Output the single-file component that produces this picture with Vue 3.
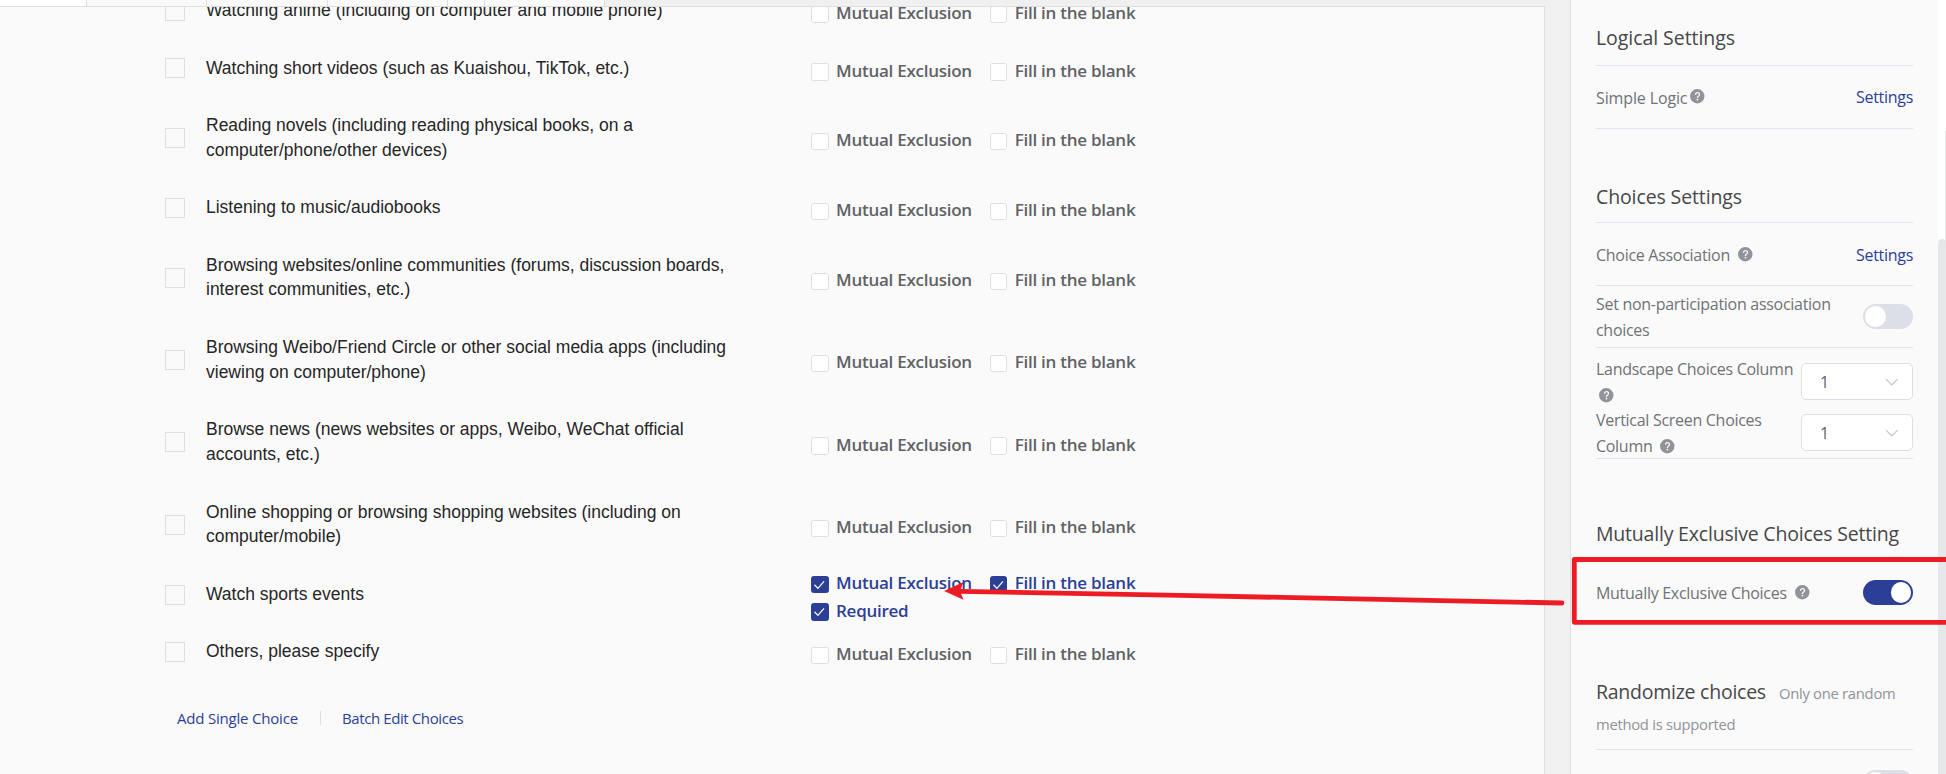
<script setup>
const plain = [{ label: 'Mutual Exclusion' }, { label: 'Fill in the blank' }]
const checked = [
  { label: 'Mutual Exclusion', on: true },
  { label: 'Fill in the blank', on: true },
  { label: 'Required', on: true },
]
const choices = [
  { lines: ['Watching anime (including on computer and mobile phone)'], options: plain },
  { lines: ['Watching short videos (such as Kuaishou, TikTok, etc.)'], options: plain },
  { lines: ['Reading novels (including reading physical books, on a', 'computer/phone/other devices)'], options: plain },
  { lines: ['Listening to music/audiobooks'], options: plain },
  { lines: ['Browsing websites/online communities (forums, discussion boards,', 'interest communities, etc.)'], options: plain },
  { lines: ['Browsing Weibo/Friend Circle or other social media apps (including', 'viewing on computer/phone)'], options: plain },
  { lines: ['Browse news (news websites or apps, Weibo, WeChat official', 'accounts, etc.)'], options: plain },
  { lines: ['Online shopping or browsing shopping websites (including on', 'computer/mobile)'], options: plain },
  { lines: ['Watch sports events'], options: checked },
  { lines: ['Others, please specify'], options: plain },
]
const helpPath =
  'M512 64a448 448 0 1 1 0 896 448 448 0 0 1 0-896zm23.744 191.488c-52.096 0-92.928 14.784-123.2 44.352-30.976 29.568-45.76 70.4-45.76 122.496h80.256c0-29.568 5.632-52.8 17.6-68.992 13.376-19.712 35.2-28.864 66.176-28.864 23.936 0 44.352 6.336 57.728 19.712 12.672 13.376 19.712 31.68 19.712 54.912 0 17.6-6.336 34.496-19.008 49.984l-8.448 9.856c-45.76 40.832-73.216 70.4-82.368 89.408-9.856 19.008-14.08 42.24-14.08 68.992v9.856h80.96v-9.856c0-16.896 3.52-31.68 10.56-45.76 6.336-12.672 15.488-24.64 28.16-35.2 33.792-29.568 54.208-48.576 60.544-55.616 16.896-22.528 26.048-51.392 26.048-86.592 0-42.944-14.08-76.736-42.24-101.376-28.16-25.344-65.472-37.312-111.232-37.312zm-12.672 406.208a54.272 54.272 0 0 0-38.72 14.784 49.408 49.408 0 0 0-15.488 38.016c0 15.488 4.928 28.16 15.488 38.016A54.848 54.848 0 0 0 523.072 768c15.488 0 28.16-4.928 38.72-14.784a51.52 51.52 0 0 0 16.192-38.72 51.968 51.968 0 0 0-15.488-38.016 55.936 55.936 0 0 0-39.424-14.784z'
</script>

<template>
  <div class="app">
    <div class="main">
      <div class="toolbar">
        <i class="tab first"></i><i class="tab"></i><i class="tab"></i><i class="tab"></i><i class="tab small"></i><i class="tab"></i>
      </div>
      <div class="sheet">
        <div class="list">
          <div v-for="(c, i) in choices" :key="i" class="choice" :class="{ double: c.lines.length > 1 }">
            <span class="box"></span>
            <div class="label"><div v-for="l in c.lines" :key="l">{{ l }}</div></div>
            <div class="options">
              <span v-for="o in c.options" :key="o.label" class="option" :class="{ on: o.on }">
                <span class="check">
                  <svg v-if="o.on" viewBox="0 0 18 18"><path d="M3.6 9l3.5 3.7L13.4 5.6" /></svg>
                </span>
                <span class="txt">{{ o.label }}</span>
              </span>
            </div>
          </div>
        </div>
        <div class="actions">
          <a class="add">Add Single Choice</a><i class="sep"></i><a class="batch">Batch Edit Choices</a>
        </div>
      </div>
    </div>

    <aside class="side">
      <h3 class="h-logic">Logical Settings</h3>
      <div class="row r-logic">
        <span class="logic-name">Simple Logic<svg class="help raised" viewBox="0 0 1024 1024"><path :d="helpPath" /></svg></span>
        <a>Settings</a>
      </div>
      <h3 class="h-choices">Choices Settings</h3>
      <div class="row r-assoc">
        <span>Choice Association<svg class="help spaced" viewBox="0 0 1024 1024"><path :d="helpPath" /></svg></span>
        <a>Settings</a>
      </div>
      <div class="row r-non">
        <span>Set non-participation association<br />choices</span>
        <span class="switch"></span>
      </div>
      <div class="columns">
        <div class="col-row">
          <span>Landscape Choices Column<br /><svg class="help start" viewBox="0 0 1024 1024"><path :d="helpPath" /></svg></span>
          <span class="select">1<svg viewBox="0 0 14 8"><path d="M1 1l6 6 6-6" /></svg></span>
        </div>
        <div class="col-row">
          <span>Vertical Screen Choices<br />Column<svg class="help spaced" viewBox="0 0 1024 1024"><path :d="helpPath" /></svg></span>
          <span class="select">1<svg viewBox="0 0 14 8"><path d="M1 1l6 6 6-6" /></svg></span>
        </div>
      </div>
      <h3 class="h-mutual">Mutually Exclusive Choices Setting</h3>
      <div class="row r-mutual">
        <span>Mutually Exclusive Choices<svg class="help spaced" viewBox="0 0 1024 1024"><path :d="helpPath" /></svg></span>
        <span class="switch on"></span>
      </div>
      <h3 class="h-random">Randomize choices<small class="s1">Only one random</small><br /><small>method is supported</small></h3>
      <div class="row r-last"><span></span><span class="switch"></span></div>
    </aside>

    <div class="rail"><i class="outer"></i><i class="thumb"></i></div>

    <svg class="marks" viewBox="0 0 1946 774">
      <path class="stroke" d="M1950 559.5H1574.3V622.3H1950" />
      <path class="stroke" d="M960 591.4L1180 595.4L1562 603" />
      <path class="head" d="M944 591L963.5 582L960 591L963.5 599.8Z" />
    </svg>
  </div>
</template>

<style>
body {
  margin: 0;
}
</style>

<style scoped>
.app {
  position: relative;
  display: flex;
  width: 1946px;
  height: 774px;
  overflow: hidden;
  background: #f0f0f0;
  font-family: 'Open Sans', 'Noto Sans', sans-serif;
  font-size: 16px;
  color: #606266;
}
.main {
  width: 1570px;
  height: 774px;
}
.toolbar {
  display: flex;
  height: 6px;
}
.tab {
  box-sizing: border-box;
  width: 120.3px;
  background: #fafafa;
  border-right: 1px solid #dedede;
}
.tab.first {
  width: 87px;
  background: #fff;
}
.tab.small {
  width: 37.3px;
}
.sheet {
  box-sizing: border-box;
  width: 1545px;
  height: 768px;
  overflow: hidden;
  background: #fafafa;
  border-top: 1px solid #dedede;
  border-right: 1px solid #dedede;
}
.list {
  margin-top: -24.6px;
  padding-left: 165px;
}
.choice {
  display: flex;
  align-items: center;
  height: 57.35px;
}
.choice.double {
  height: 82.3px;
}
.box {
  box-sizing: border-box;
  width: 20px;
  height: 20px;
  margin-right: 21px;
  border: 1px solid #dcdfe6;
}
.label {
  width: 605px;
  font: 17.5px/24.6px 'Liberation Sans', Arial, sans-serif;
  color: #262626;
  padding-bottom: 1px;
  white-space: nowrap;
}
.options {
  display: flex;
  flex-wrap: wrap;
  width: 360px;
  padding-top: 7px;
}
.option {
  display: flex;
  align-items: center;
  width: 178.7px;
  height: 27.4px;
}
.check {
  box-sizing: border-box;
  width: 17.5px;
  height: 17.5px;
  margin-right: 7.5px;
  background: #fff;
  border: 1px solid #dcdfe6;
  border-radius: 2.5px;
}
.check svg {
  display: block;
  width: 17.5px;
  height: 17.5px;
  margin: -1px;
  fill: none;
  stroke: #fff;
  stroke-width: 1.25;
}
.txt {
  font-size: 17px;
  font-weight: 600;
  line-height: 20px;
  letter-spacing: -0.26px;
  white-space: nowrap;
  margin-top: -2.5px;
}
.on .check {
  background: #2b3f97;
  border-color: #2b3f97;
}
.on .txt {
  color: #2b3f97;
}
.actions {
  display: flex;
  align-items: center;
  height: 24px;
  margin-top: 25px;
  padding-left: 177px;
  font-size: 15px;
  color: #2b3f97;
  white-space: nowrap;
}
.add {
  width: 143px;
  letter-spacing: -0.2px;
}
.sep {
  width: 1px;
  height: 14px;
  margin-right: 21px;
  background: #dcdfe6;
}
.batch {
  letter-spacing: -0.4px;
}
.side {
  box-sizing: border-box;
  width: 368px;
  height: 774px;
  overflow: hidden;
  padding: 0 25px;
  background: #fafafa;
  border-left: 1px solid #dcdfe6;
  letter-spacing: -0.29px;
  line-height: 26px;
  color: #707277;
}
h3 {
  box-sizing: border-box;
  display: flex;
  align-items: center;
  margin: 0;
  border-bottom: 1px solid #dfe4ed;
  font-size: 19.5px;
  font-weight: 400;
  letter-spacing: -0.12px;
  color: #464749;
  white-space: nowrap;
}
.h-logic {
  height: 66px;
  padding-top: 11px;
  letter-spacing: -0.06px;
}
.h-choices {
  height: 53px;
  margin-top: 41px;
  padding-top: 1px;
}
.h-mutual {
  height: 52px;
  margin-top: 49px;
  padding-top: 1px;
  letter-spacing: -0.2px;
}
.h-random {
  display: block;
  height: 77px;
  margin-top: 48px;
  padding-top: 4px;
  line-height: 30px;
  letter-spacing: -0.25px;
}
small {
  font-size: 14.8px;
  letter-spacing: -0.28px;
  color: #909399;
}
.s1 {
  margin-left: 13px;
}
.row {
  box-sizing: border-box;
  display: flex;
  align-items: center;
  justify-content: space-between;
  border-bottom: 1px solid #dfe4ed;
  white-space: nowrap;
}
.row a {
  color: #2b3f97;
}
.r-logic {
  height: 63px;
}
.logic-name {
  padding-top: 2px;
  letter-spacing: -0.13px;
}
.r-assoc {
  height: 63px;
  padding-top: 1px;
}
.r-non {
  height: 62px;
}
.r-non span:first-child {
  padding-top: 1px;
}
.r-mutual {
  height: 65px;
  border-bottom: 0;
}
.r-last {
  align-items: flex-start;
  padding-top: 20px;
  border: 0;
}
.help {
  width: 16.5px;
  height: 16.5px;
  fill: #909399;
  vertical-align: -2px;
}
.spaced {
  margin-left: 7px;
}
.raised {
  margin-left: 2px;
  vertical-align: 0;
}
.start {
  margin-left: 2px;
}
.columns {
  padding-top: 8px;
  border-bottom: 1px solid #dfe4ed;
}
.col-row {
  display: flex;
  align-items: center;
  justify-content: space-between;
  height: 51px;
  white-space: nowrap;
}
.col-row > span:first-child {
  padding-top: 1px;
}
.select {
  box-sizing: border-box;
  display: flex;
  align-items: center;
  justify-content: space-between;
  width: 112px;
  height: 37px;
  padding: 1px 14px 0 18px;
  background: #fff;
  border: 1px solid #dcdfe6;
  border-radius: 5px;
  color: #606266;
}
.select svg {
  width: 13.5px;
  height: 8px;
  fill: none;
  stroke: #c0c4cc;
  stroke-width: 1.2;
}
.switch {
  box-sizing: border-box;
  display: flex;
  width: 50px;
  height: 25px;
  padding: 2px;
  background: #dcdfe6;
  border-radius: 13px;
}
.switch::after {
  content: '';
  width: 20.5px;
  height: 20.5px;
  background: #fff;
  border-radius: 50%;
}
.switch.on {
  justify-content: flex-end;
  background: #2b3f97;
}
.rail {
  position: relative;
  width: 8px;
  height: 774px;
  background: #fff;
}
.outer {
  position: absolute;
  right: 0;
  top: 131px;
  width: 1px;
  height: 120px;
  background: #e4e7ea;
}
.thumb {
  position: absolute;
  left: 0;
  top: 239px;
  width: 8px;
  height: 540px;
  background: #e4e8eb;
  border-radius: 4px 4px 0 0;
}
.marks {
  position: absolute;
  left: 0;
  top: 0;
  width: 1946px;
  height: 774px;
}
.stroke {
  fill: none;
  stroke: #ed1c24;
  stroke-width: 4.8;
  stroke-linecap: round;
  stroke-linejoin: round;
}
.head {
  fill: #ed1c24;
}
</style>
